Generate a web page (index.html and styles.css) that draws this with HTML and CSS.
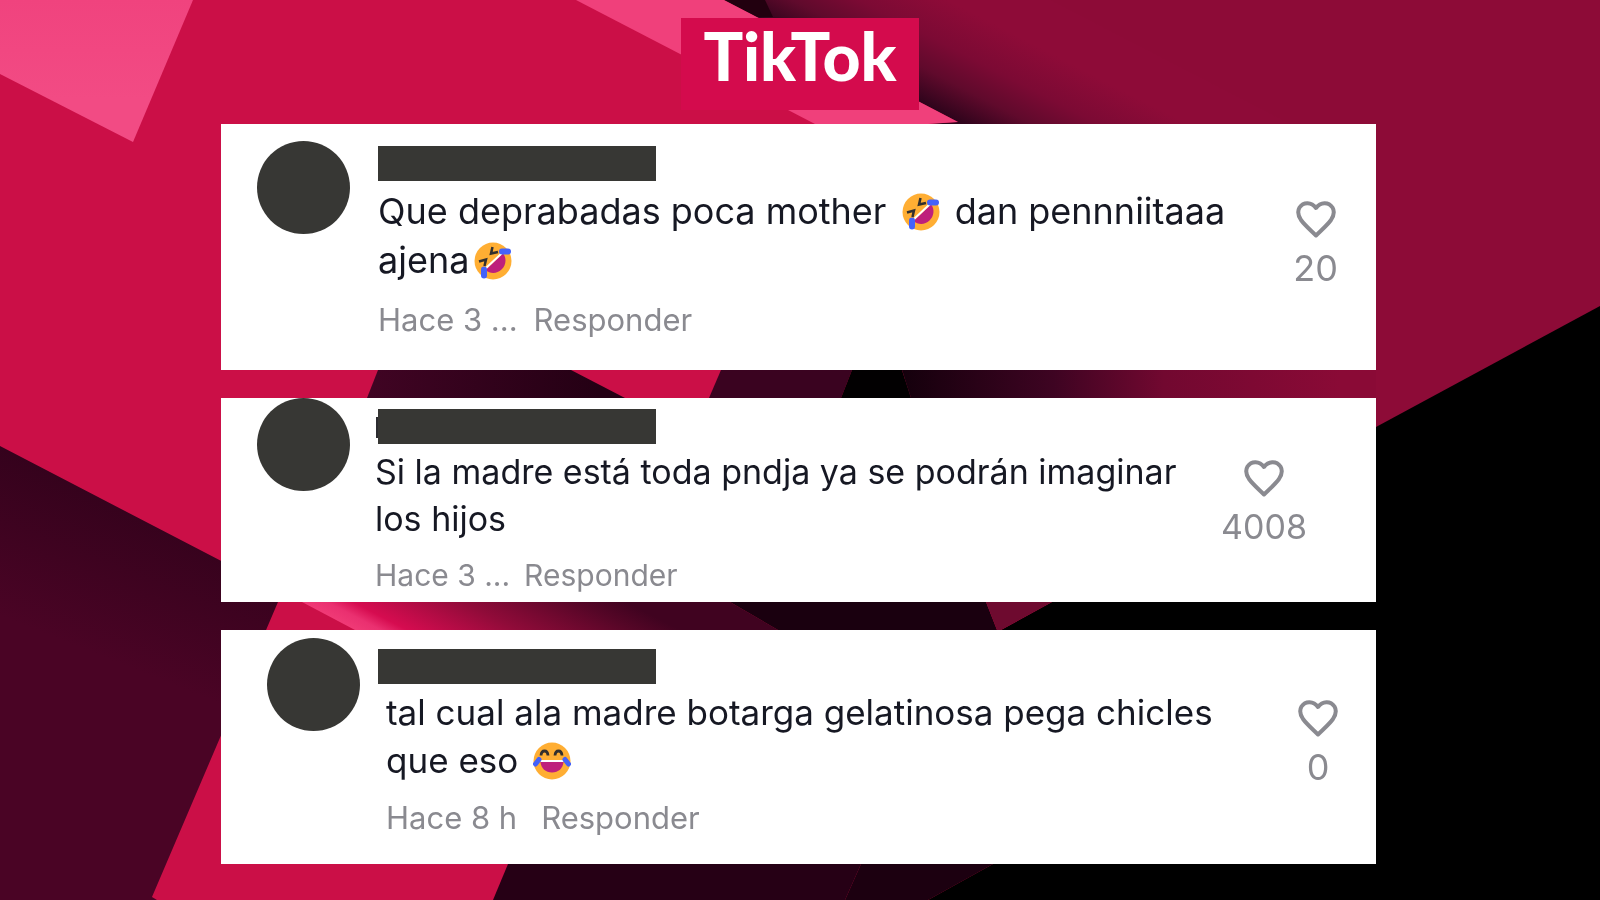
FILE: index.html
```html
<!DOCTYPE html>
<html lang="es">
<head>
    <meta charset="UTF-8">
    <meta name="viewport" content="width=device-width, initial-scale=1.0">
    <title>TikTok</title>
    <link rel="stylesheet" href="styles.css">
</head>
<body>
    <!-- Fondo de formas geométricas -->
    <svg class="backdrop" viewBox="0 0 1600 900" preserveAspectRatio="none" aria-hidden="true">
        <defs>
            <linearGradient id="pinkCorner" x1="0" y1="1" x2="0" y2="0">
                <stop offset="0.3" stop-color="#f24b84"/>
                <stop offset="1" stop-color="#f0437e"/>
            </linearGradient>
            <linearGradient id="shadowTop" gradientUnits="userSpaceOnUse" x1="841" y1="60" x2="888" y2="-31">
                <stop offset="0" stop-color="#30041c"/>
                <stop offset="0.3" stop-color="#600a2c"/>
                <stop offset="0.6" stop-color="#7c0a34"/>
                <stop offset="1" stop-color="#8e0b38"/>
            </linearGradient>
            <linearGradient id="band" gradientUnits="userSpaceOnUse" x1="900" y1="0" x2="1340" y2="0">
                <stop offset="0" stop-color="#14000c"/>
                <stop offset="0.35" stop-color="#3e0422"/>
                <stop offset="0.6" stop-color="#720830"/>
                <stop offset="1" stop-color="#8a0a36"/>
            </linearGradient>
            <linearGradient id="plumStrip" gradientUnits="userSpaceOnUse" x1="370" y1="0" x2="600" y2="0">
                <stop offset="0" stop-color="#400423"/>
                <stop offset="1" stop-color="#240014"/>
            </linearGradient>
            <linearGradient id="plumLeft" gradientUnits="userSpaceOnUse" x1="120" y1="490" x2="60" y2="640">
                <stop offset="0" stop-color="#34021c"/>
                <stop offset="1" stop-color="#4a0425"/>
            </linearGradient>
            <linearGradient id="glow" gradientUnits="userSpaceOnUse" x1="355" y1="630" x2="424" y2="497">
                <stop offset="0" stop-color="#f03a76"/>
                <stop offset="0.08" stop-color="#ea3070"/>
                <stop offset="0.16" stop-color="#d60c50"/>
                <stop offset="0.5" stop-color="#900b39"/>
                <stop offset="0.85" stop-color="#560627"/>
                <stop offset="1" stop-color="#400320"/>
            </linearGradient>
        </defs>
        <rect width="1600" height="900" fill="#cb0f47"/>
        <polygon points="0,0 193,0 133,142 0,74" fill="url(#pinkCorner)"/>
        <polygon points="724,0 1600,0 1600,320 1375,440 900,440 928,124 958,122" fill="#8d0b37"/>
        <polygon points="724,0 1050,0 1290,124 928,124 958,122" fill="url(#shadowTop)"/>
        <polygon points="724,0 765,0 773,17 757,17" fill="#22000f"/>
        <polygon points="576,0 724,0 958,122 928,124 815,124" fill="#f0407b"/>
        <!-- Franja superior -->
        <polygon points="378,370 571,370 625,398 367,398" fill="url(#plumStrip)"/>
        <polygon points="721,370 852,370 841,398 709,398" fill="#3a0320"/>
        <polygon points="852,370 902,370 911,398 841,398" fill="#020001"/>
        <polygon points="902,370 1376,370 1376,398 911,398" fill="url(#band)"/>
        <!-- Lado izquierdo y franja inferior -->
        <polygon points="0,446 300,602 278,602 152,897 157,900 0,900" fill="url(#plumLeft)"/>
        <polygon points="302,602 730,602 778,630 355,630" fill="url(#glow)"/>
        <polygon points="730,602 986,602 997,630 778,630" fill="#1a000f"/>
        <polygon points="1600,306 1052,602 1001,630 1001,900 1600,900" fill="#000"/>
        <polygon points="986,602 1052,602 1001,630 997,630" fill="#6e0a2f"/>
        <polygon points="508,864 861,864 845,900 493,900" fill="#260015"/>
        <polygon points="861,864 993,864 928,900 845,900" fill="#1c0010"/>
        <polygon points="993,864 1100,864 1100,900 928,900" fill="#000"/>
    </svg>

    <!-- Iconos reutilizables -->
    <svg class="sprite" width="0" height="0" aria-hidden="true">
        <symbol id="heart" viewBox="0 0 40 37">
            <path d="M20 34.500C15 29.500 9 24.500 5 19C2 14.500 1.500 10 3.500 6.500C7.500 .500 15.500 .800 20 7C24.500 .800 32.500 .500 36.500 6.500C38.500 10 38 14.500 35 19C31 24.500 25 29.500 20 34.500Z" fill="none" stroke="#8a8a90" stroke-width="4" stroke-linejoin="round"/>
        </symbol>
        <symbol id="rofl" viewBox="0 0 38 38">
            <circle cx="19" cy="19" r="18.500" fill="#ffae33"/>
            <path d="M11.500 28L29 11.500C33 16 32 23.500 27.500 27.500C23 32 16 32 11.500 28Z" fill="#be207c"/>
            <path d="M11.500 26.500L27.500 11.500" stroke="#fff" stroke-width="2"/>
            <path d="M5 19.500L12 17.500L10.500 24M18.500 5L17 11.500L24 10" fill="none" stroke="#33302e" stroke-width="2.500"/>
            <rect x="25" y="6.500" width="12" height="6" rx="3" fill="#4462fa"/>
            <rect x="7" y="24.500" width="6" height="12" rx="3" fill="#4462fa"/>
        </symbol>
        <symbol id="joy" viewBox="0 0 38 38">
            <circle cx="19" cy="19" r="18.500" fill="#ffae33"/>
            <path d="M7.500 18H30.500C31 25.500 26 30.500 19 30.500C12 30.500 7 25.500 7.500 18Z" fill="#be207c"/>
            <path d="M7.500 19H30.500" stroke="#fff" stroke-width="2"/>
            <path d="M8 13.500C8.500 7.500 14.500 7.500 15 13.500M22 13.500C22.500 7.500 28.500 7.500 29 13.500" fill="none" stroke="#33302e" stroke-width="2.800"/>
            <path d="M6 17.500L2.500 22M32 17.500L35.500 22" stroke="#4462fa" stroke-width="5" stroke-linecap="round"/>
        </symbol>
    </svg>

    <h1 class="title">TikTok</h1>

    <main class="comments">
        <article class="comment">
            <div class="avatar"></div>
            <div class="body">
                <div class="username"></div>
                <p class="text">Que deprabadas poca mother <svg class="emoji" role="img" aria-label="🤣"><use href="#rofl"/></svg> dan pennniitaaa<br>ajena<svg class="emoji" role="img" aria-label="🤣"><use href="#rofl"/></svg></p>
                <div class="meta"><span>Hace 3 ...</span><button class="reply">Responder</button></div>
            </div>
            <button class="like" aria-label="Me gusta, 20"><svg class="heart"><use href="#heart"/></svg>20</button>
        </article>

        <article class="comment small">
            <div class="avatar"></div>
            <div class="body">
                <div class="username"></div>
                <p class="text">Si la madre está toda pndja ya se podrán imaginar<br>los hijos</p>
                <div class="meta"><span>Hace 3 ...</span><button class="reply">Responder</button></div>
            </div>
            <button class="like" aria-label="Me gusta, 4008"><svg class="heart"><use href="#heart"/></svg>4008</button>
        </article>

        <article class="comment inset">
            <div class="avatar"></div>
            <div class="body">
                <div class="username"></div>
                <p class="text">tal cual ala madre botarga gelatinosa pega chicles<br>que eso <svg class="emoji" role="img" aria-label="😂"><use href="#joy"/></svg></p>
                <div class="meta"><span>Hace 8 h</span><button class="reply">Responder</button></div>
            </div>
            <button class="like" aria-label="Me gusta, 0"><svg class="heart"><use href="#heart"/></svg>0</button>
        </article>
    </main>
</body>
</html>
```
FILE: styles.css
```css
* {
    box-sizing: border-box;
}
body {
    margin: 0;
    padding: 18px 0 36px;
    font-family: Inter, "Liberation Sans", sans-serif;
    color: #161823;
}
.backdrop {
    position: fixed;
    inset: 0;
    z-index: -1;
    width: 100%;
    height: 100%;
}
.sprite {
    position: absolute;
}
.title {
    width: fit-content;
    height: 92px;
    margin: 0 auto 14px;
    padding: 0 22px;
    background: #d40b4d;
    color: #fff;
    font-family: Lato, "Open Sans", sans-serif;
    font-size: 66px;
    font-weight: 900;
    line-height: 76px;
}
.comments {
    display: flex;
    flex-direction: column;
    gap: 28px;
    padding: 0 224px 0 221px;
}
.comment {
    display: flex;
    align-items: flex-start;
    padding: 17px 38px 30px 36px;
    background: #fff;
}
.avatar {
    flex: none;
    width: 93px;
    height: 93px;
    margin-right: 28px;
    border-radius: 50%;
    background: #373734;
}
.body {
    flex: 1;
    padding-top: 5px;
    white-space: nowrap;
}
.username {
    width: 278px;
    height: 35px;
    background: #373734;
}
.text {
    margin: 6px 0 15px;
    font-size: 36px;
    line-height: 49px;
}
.emoji {
    width: 38px;
    height: 38px;
    margin: 0 5px;
    vertical-align: -7px;
}
.meta {
    display: flex;
    gap: 16px;
    font-size: 31px;
    line-height: 40px;
    color: #8a8a90;
}
button {
    padding: 0;
    border: 0;
    background: none;
    font: inherit;
    color: #8a8a90;
    cursor: pointer;
}
.like {
    display: flex;
    flex-direction: column;
    align-items: center;
    gap: 8px;
    padding-top: 60px;
    font-size: 36px;
    line-height: 44px;
}
.heart {
    width: 40px;
    height: 37px;
}

/* comentario compacto */
.small {
    padding: 0 69px 7px 36px;
}
.small .avatar {
    margin-right: 25px;
}
.small .body {
    padding-top: 11px;
}
.small .username {
    margin-left: 3px;
}
.small .username::before {
    content: "";
    display: block;
    width: 2px;
    height: 21px;
    margin-left: -2px;
    border-top: 8px solid transparent;
    background: #2c2c30 padding-box;
}
.small .text {
    margin: 4px 0 13px;
    font-size: 34px;
    line-height: 47px;
}
.small .meta {
    font-size: 30px;
    gap: 14px;
}
.small .like {
    padding-top: 62px;
    font-size: 34px;
}

/* comentario con texto sangrado */
.inset {
    padding: 8px 38px 26px 46px;
}
.inset .avatar {
    margin-right: 18px;
}
.inset .body {
    padding-top: 11px;
}
.inset .text {
    margin: 4px 0 14px;
    padding-left: 8px;
    font-size: 35px;
    line-height: 48px;
}
.inset .meta {
    gap: 24px;
    padding-left: 8px;
}
.inset .like {
    padding-top: 62px;
}
```
